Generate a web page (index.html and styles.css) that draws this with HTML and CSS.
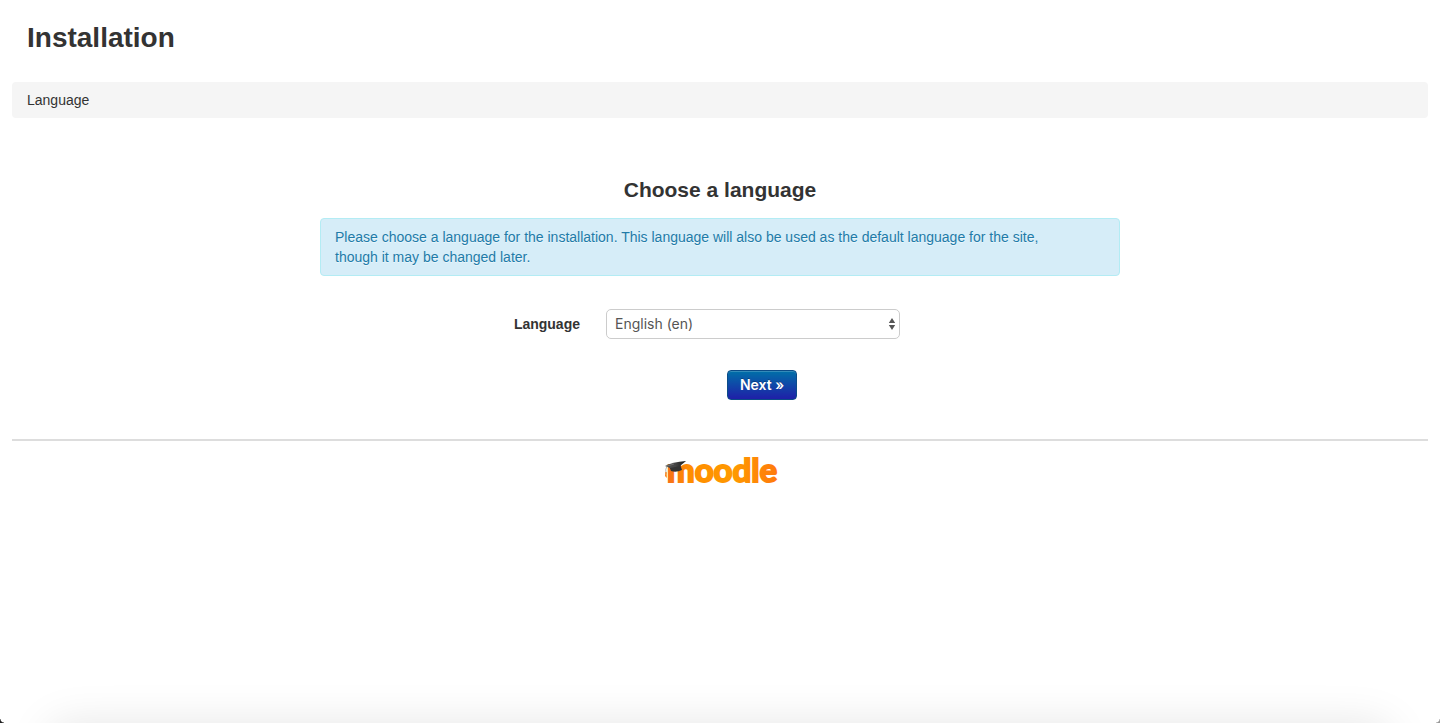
FILE: index.html
```html
<!DOCTYPE html>
<html lang="en">
<head>
    <meta charset="UTF-8">
    <meta name="viewport" content="width=device-width, initial-scale=1.0">
    <title>Installation</title>
    <link rel="stylesheet" href="styles.css">
</head>
<body>

<div class="page">
    <header class="page-header">
        <h1>Installation</h1>
    </header>

    <nav class="breadcrumb">Language</nav>

    <main class="content">
        <h2>Choose a language</h2>
        <div class="alert">Please choose a language for the installation. This language will also be used as the default language for the site, though it may be changed later.</div>

        <form class="install-form">
            <div class="form-row">
                <label for="lang">Language</label>
                <div class="select-wrap">
                    <select id="lang" name="lang">
                        <option value="en" selected>English (en)</option>
                    </select>
                    <svg class="arrows" width="8" height="12" viewBox="0 0 8 12" aria-hidden="true">
                        <path d="M4 0L7.2 5H.8zM4 12L.8 7h6.4z" fill="#555"/>
                    </svg>
                </div>
            </div>
            <div class="form-buttons">
                <button type="button" class="btn">Next »</button>
            </div>
        </form>
    </main>

    <footer class="page-footer">
        <a href="#" class="logo" aria-label="moodle">
            <svg width="124" height="44" viewBox="0 0 124 44">
                <defs>
                    <linearGradient id="orange" x1="0" x2="1" y1="0" y2="0">
                        <stop offset="0" stop-color="#f7701a"/>
                        <stop offset=".2" stop-color="#ff8c00"/>
                        <stop offset=".6" stop-color="#ff9a00"/>
                        <stop offset="1" stop-color="#ff7a0c"/>
                    </linearGradient>
                    <linearGradient id="cap" x1="0" x2="1" y1="0" y2="0">
                        <stop offset="0" stop-color="#555"/>
                        <stop offset=".5" stop-color="#444"/>
                        <stop offset="1" stop-color="#181818"/>
                    </linearGradient>
                </defs>
                <text class="logo-text" x="9" y="32" fill="url(#orange)" stroke="url(#orange)">moodle</text>
                <!-- graduation cap -->
                <path d="M11 16L22 14L24 20Q18 23 13 21Z" fill="#333"/>
                <path d="M7 16Q14 12 28 11L22 16L12 18Z" fill="url(#cap)"/>
                <path d="M16 14L9 16Q7 19 8 24" fill="none" stroke="#888" stroke-width=".6"/>
                <path d="M7.4 22L8.6 22L8.8 28L7 26Z" fill="#f98012"/>
            </svg>
        </a>
    </footer>
</div>

<div class="bottom-shade"></div>
<div class="corner corner-left"></div>
<div class="corner corner-right"></div>

</body>
</html>
```
FILE: styles.css
```css
body {
    margin: 0;
    overflow-x: hidden;
    background-color: #fff;
    color: #333;
    font-family: "Liberation Sans", Arial, sans-serif;
    font-size: 14px;
    line-height: 20px;
}
.page {
    padding: 0 12px;
}
.page-header {
    padding: 18px 15px 24px;
}
h1 {
    margin: 0;
    font-size: 28px;
    line-height: 40px;
}
.breadcrumb {
    padding: 8px 15px;
    background-color: #f5f5f5;
    border-radius: 4px;
}
.content {
    max-width: 800px;
    margin: 52px auto 0;
}
h2 {
    margin: 0 0 8px;
    font-size: 21px;
    line-height: 40px;
    text-align: center;
}
.alert {
    padding: 8px 35px 8px 14px;
    background-color: #d6edf8;
    border: 1px solid #b3ecf4;
    border-radius: 4px;
    color: #217ba8;
    text-shadow: 0 1px 0 rgba(255, 255, 255, 0.5);
}
.install-form {
    padding: 33px 0 39px;
}
.form-row {
    display: grid;
    grid-template-columns: 260px 294px;
    column-gap: 26px;
    align-items: center;
}
label {
    font-weight: bold;
    text-align: right;
}
.select-wrap {
    position: relative;
}
select {
    display: block;
    width: 100%;
    height: 30px;
    padding: 0 20px 2px 8px;
    appearance: none;
    background-color: #fff;
    border: 1px solid #ccc;
    border-radius: 5px;
    color: #555;
    font-family: Inter, sans-serif;
    font-size: 14px;
}
.arrows {
    position: absolute;
    top: 9px;
    right: 4px;
    pointer-events: none;
}
.form-buttons {
    margin-top: 31px;
    padding-left: 84px;
    text-align: center;
}
.btn {
    display: inline-block;
    height: 30px;
    padding: 0 12px 2px;
    vertical-align: top;
    background-image: linear-gradient(to bottom, #0070a8, #1f1fa8);
    border: 1px solid #0b4c88;
    border-radius: 4px;
    box-shadow: inset 0 1px 0 rgba(255, 255, 255, 0.2);
    color: #fff;
    font-family: Inter, sans-serif;
    font-size: 14px;
    font-weight: 600;
    text-shadow: 0 -1px 0 rgba(0, 0, 0, 0.25);
}
.page-footer {
    padding-top: 9px;
    border-top: 2px solid #ddd;
    text-align: center;
}
.logo {
    display: inline-block;
}
.logo svg {
    display: block;
}
.logo-text {
    font-family: Lato, sans-serif;
    font-size: 33px;
    font-weight: 700;
    stroke-width: 2px;
}

/* soft shadow rising from the bottom edge of the window */
.bottom-shade {
    position: fixed;
    right: 60px;
    bottom: -34px;
    left: 60px;
    height: 20px;
    border-radius: 10px;
    box-shadow: 0 0 44px 14px rgba(0, 0, 0, 0.1);
    pointer-events: none;
}
.corner {
    position: fixed;
    bottom: 0;
    width: 4px;
    height: 4px;
}
.corner-left {
    left: 0;
    background: radial-gradient(circle at 100% 0, transparent 3px, #222 4px);
}
.corner-right {
    right: 0;
    background: radial-gradient(circle at 0 0, transparent 3px, #999 4px);
}
```
